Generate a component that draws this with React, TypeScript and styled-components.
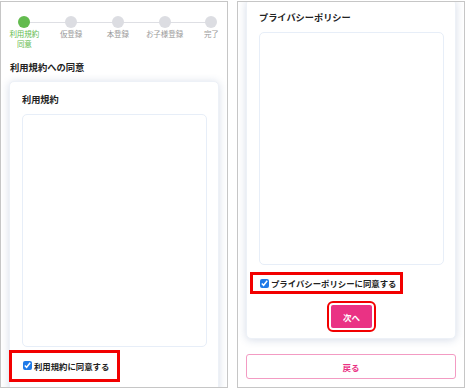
import React from 'react'
import styled, { createGlobalStyle } from 'styled-components'

const GlobalStyle = createGlobalStyle`
  html, body {
    margin: 0;
    padding: 0;
    background: #ffffff;
  }
  body {
    font-family: "Noto Sans CJK JP", "Noto Sans", sans-serif;
    color: #222222;
  }
`

const Page = styled.div`
  display: flex;
  gap: 9px;
  padding-top: 1px;
  width: 468px;
  height: 392px;
  box-sizing: border-box;
`

const Frame = styled.div<{ $bottom?: boolean }>`
  width: 228px;
  height: 387px;
  box-sizing: border-box;
  border: 1px solid #c6c6c6;
  overflow: hidden;
  display: flex;
  flex-direction: column;
  justify-content: ${({ $bottom }) => ($bottom ? 'flex-end' : 'flex-start')};
  padding-bottom: ${({ $bottom }) => ($bottom ? '8px' : '0')};
`

const Stepper = styled.div`
  position: relative;
  display: grid;
  grid-template-columns: repeat(5, 46.75px);
  padding-top: 14px;

  &::before {
    content: '';
    position: absolute;
    top: 19.5px;
    left: 23.4px;
    width: 187px;
    height: 1px;
    background: #dedfe4;
  }
`

const Step = styled.div<{ $active?: boolean }>`
  display: flex;
  flex-direction: column;
  align-items: center;
  font-size: 7.5px;
  line-height: 9.5px;
  text-align: center;
  color: ${({ $active }) => ($active ? '#63bb4f' : '#9a9a9a')};
  white-space: nowrap;
`

const Dot = styled.span<{ $active?: boolean }>`
  position: relative;
  z-index: 1;
  width: 12px;
  height: 12px;
  border-radius: 50%;
  margin-bottom: 1px;
  background: ${({ $active }) => ($active ? '#63bb4f' : '#dcdde2')};
`

const Heading = styled.h2`
  margin: 12.5px 0 0 9px;
  font-size: 9.3px;
  line-height: 12px;
  font-weight: 700;
`

const Card = styled.div<{ $top?: number }>`
  margin: ${({ $top }) => $top ?? 0}px 8px 0 8px;
  flex-shrink: 0;
  background: #ffffff;
  border: 1px solid #edf1f7;
  border-radius: 5px;
  box-shadow: 0 1px 8px rgba(50, 80, 140, 0.2);
  padding: 11px 11px 10px 12px;
  display: flex;
  flex-direction: column;
`

const CardTitle = styled.h3`
  margin: 0;
  font-size: 9.2px;
  line-height: 12px;
  font-weight: 700;
`

const TextBox = styled.div`
  margin-top: 9px;
  height: 233px;
  box-sizing: border-box;
  border: 1px solid #e7eef8;
  border-radius: 5px;
`

const CheckRow = styled.label<{ $h: number; $pl: number; $pr: number; $ml: number; $mt: number }>`
  align-self: flex-start;
  display: inline-flex;
  align-items: center;
  gap: 2px;
  box-sizing: border-box;
  height: ${({ $h }) => $h}px;
  margin-top: ${({ $mt }) => $mt}px;
  margin-left: ${({ $ml }) => $ml}px;
  padding: 0 ${({ $pr }) => $pr}px 0 ${({ $pl }) => $pl}px;
  border: 3px solid #f20000;
  font-size: 8.4px;
  font-weight: 700;
  color: #222222;
  white-space: nowrap;
`

const Check = styled.input`
  width: 9px;
  height: 9px;
  margin: 0;
  accent-color: #1f7ae8;
`

const NextButton = styled.button`
  align-self: center;
  margin-top: 11px;
  width: 41px;
  height: 23px;
  border: none;
  border-radius: 2px;
  background: #ea3284;
  color: #ffffff;
  font-family: inherit;
  font-size: 8.5px;
  font-weight: 700;
  outline: 2px solid #f20000;
  outline-offset: 2px;
`

const BackButton = styled.button`
  flex-shrink: 0;
  margin: 15px 8px 0 8px;
  height: 25px;
  background: #ffffff;
  border: 1px solid #f39bc3;
  border-radius: 3px;
  color: #ea3284;
  font-family: inherit;
  font-size: 8.5px;
  font-weight: 700;
`

const steps = ['仮登録', '本登録', 'お子様登録', '完了']

export default function App() {
  return (
    <>
      <GlobalStyle />
      <Page>
        <Frame>
          <Stepper>
            <Step $active>
              <Dot $active />
              <span>利用規約</span>
              <span>同意</span>
            </Step>
            {steps.map((s) => (
              <Step key={s}>
                <Dot />
                {s}
              </Step>
            ))}
          </Stepper>
          <Heading>利用規約への同意</Heading>
          <Card $top={8}>
            <CardTitle>利用規約</CardTitle>
            <TextBox />
            <CheckRow $h={32} $mt={3} $ml={-13} $pl={11} $pr={8}>
              <Check type="checkbox" checked readOnly />
              利用規約に同意する
            </CheckRow>
          </Card>
        </Frame>
        <Frame $bottom>
          <Card>
            <CardTitle>プライバシーポリシー</CardTitle>
            <TextBox />
            <CheckRow $h={22} $mt={7} $ml={-9} $pl={7} $pr={4}>
              <Check type="checkbox" checked readOnly />
              プライバシーポリシーに同意する
            </CheckRow>
            <NextButton>次へ</NextButton>
          </Card>
          <BackButton>戻る</BackButton>
        </Frame>
      </Page>
    </>
  )
}
